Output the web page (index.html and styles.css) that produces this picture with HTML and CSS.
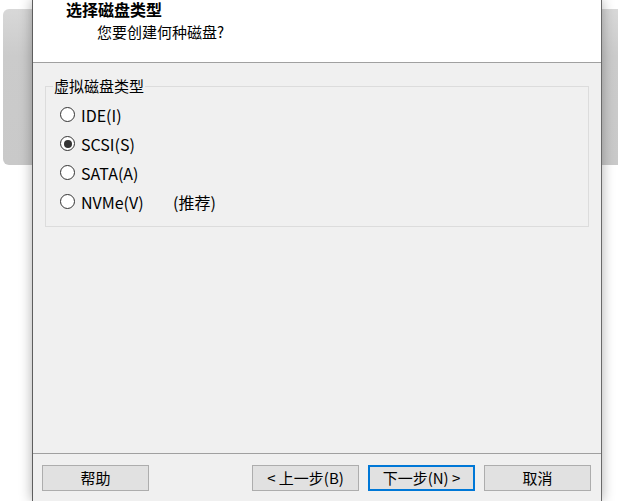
FILE: index.html
```html
<!DOCTYPE html>
<html lang="zh-CN">
<head>
<meta charset="utf-8">
<title>新建虚拟机向导</title>
<link rel="stylesheet" href="styles.css">
</head>
<body>
<div class="backdrop"></div>
<div class="dialog">
  <header class="head">
    <div class="title">选择磁盘类型</div>
    <div class="subtitle">您要创建何种磁盘?</div>
  </header>
  <main class="main">
    <fieldset class="group">
      <legend class="legend">虚拟磁盘类型</legend>
      <div class="options">
        <div class="opt"><span class="radio"></span><span class="lbl">IDE(I)</span></div>
        <div class="opt"><span class="radio checked"></span><span class="lbl">SCSI(S)</span></div>
        <div class="opt"><span class="radio"></span><span class="lbl">SATA(A)</span></div>
        <div class="opt"><span class="radio"></span><span class="lbl wide">NVMe(V)</span><span class="lbl">(推荐)</span></div>
      </div>
    </fieldset>
  </main>
  <footer class="foot">
    <button class="btn help">帮助</button>
    <button class="btn">&lt; 上一步(B)</button>
    <button class="btn default">下一步(N) &gt;</button>
    <button class="btn">取消</button>
  </footer>
</div>
</body>
</html>
```
FILE: styles.css
```css
* { box-sizing: border-box; }
html, body {
  margin: 0;
  width: 618px;
  height: 501px;
  overflow: hidden;
  background: #ffffff;
}
body {
  position: relative;
  font-family: "Noto Sans CJK SC", "Noto Sans", sans-serif;
  font-size: 15px;
  color: #000;
}
.backdrop {
  position: absolute;
  left: 3px;
  top: 9px;
  width: 640px;
  height: 156px;
  border-radius: 6px 0 0 6px;
  background: linear-gradient(180deg, #d8d8d8 0%, #cbcbcb 30%, #c9c9c9 100%);
}
.dialog {
  position: relative;
  margin-left: 32px;
  width: 570px;
  height: 501px;
  background: #f0f0f0;
  border-left: 1px solid #5e5e5e;
  border-right: 1px solid #6a6a6a;
  box-shadow: 0 0 12px rgba(0, 0, 0, 0.32);
  display: flex;
  flex-direction: column;
}
.head {
  height: 63px;
  background: #ffffff;
  border-bottom: 1px solid #a0a0a0;
  padding-left: 33px;
  padding-top: 1px;
}
.title {
  font-size: 16px;
  font-weight: bold;
  line-height: 17px;
}
.subtitle {
  margin-top: 5px;
  padding-left: 31px;
  font-size: 15px;
  line-height: 18px;
}
.main {
  height: 391px;
  border-bottom: 1px solid #a0a0a0;
  padding-top: 14px;
}
.group {
  margin: 0 12px;
  border: 1px solid #dcdcdc;
  padding: 0 0 10px 7px;
  min-width: 0;
}
.legend {
  padding: 0 1px;
  font-size: 15px;
  line-height: 18px;
}
.options {
  display: flex;
  flex-direction: column;
  padding: 5px 0 0 7px;
}
.opt {
  height: 29px;
  display: flex;
  align-items: center;
  line-height: 18px;
}
.radio {
  width: 15px;
  height: 15px;
  border-radius: 50%;
  border: 1px solid #333333;
  background: #ffffff;
  margin-right: 6px;
  display: grid;
  place-items: center;
  flex: none;
}
.radio.checked::after {
  content: "";
  width: 8px;
  height: 8px;
  border-radius: 50%;
  background: #333333;
}
.lbl {
  font-size: 16px;
}
.lbl.wide {
  display: inline-block;
  width: 92px;
}
.foot {
  flex: 1;
  display: flex;
  gap: 9px;
  padding: 11px 10px 0 9px;
  align-items: flex-start;
}
.btn {
  width: 107px;
  height: 26px;
  padding: 0;
  border: 1px solid #adadad;
  background: #e1e1e1;
  font-family: "Noto Sans CJK SC", "Noto Sans", sans-serif;
  font-size: 15px;
  line-height: 18px;
  color: #000;
}
.btn.help { margin-right: auto; }
.btn.default { border: 2px solid #0078d7; }
```
